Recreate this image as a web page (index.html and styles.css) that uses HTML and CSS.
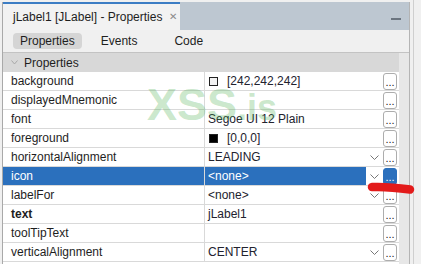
FILE: index.html
```html
<!DOCTYPE html>
<html lang="en">
<head>
	<meta charset="UTF-8">
	<title>jLabel1 [JLabel] - Properties</title>
	<link rel="stylesheet" href="styles.css">
</head>
<body>

<div class="frame">
	<div class="panel">
		<div class="header">
			<div class="doc-tab">
				<span class="tab-title">jLabel1 [JLabel] - Properties</span>
				<span class="tab-close">&#x2715;</span>
			</div>
			<span class="minimize"></span>
		</div>

		<div class="toolbar">
			<span class="mode active">Properties</span>
			<span class="mode events">Events</span>
			<span class="mode code">Code</span>
		</div>

		<div class="sheet">
			<div class="grid">
				<div class="category">
					<svg class="fold" width="7" height="5" viewBox="0 0 7 5"><polyline points="0.5,0.5 3.5,4 6.5,0.5" fill="none" stroke="#a8a8a8" stroke-width="1"/></svg>
					Properties
				</div>

				<div class="row">
					<div class="name">background</div>
					<div class="value"><span class="swatch"></span><span class="text">[242,242,242]</span></div>
					<div class="more"><span class="dots">...</span></div>
				</div>
				<div class="row">
					<div class="name">displayedMnemonic</div>
					<div class="value"></div>
					<div class="more"><span class="dots">...</span></div>
				</div>
				<div class="row">
					<div class="name">font</div>
					<div class="value"><span class="text">Segoe UI 12 Plain</span></div>
					<div class="more"><span class="dots">...</span></div>
				</div>
				<div class="row">
					<div class="name">foreground</div>
					<div class="value"><span class="swatch black"></span><span class="text">[0,0,0]</span></div>
					<div class="more"><span class="dots">...</span></div>
				</div>
				<div class="row">
					<div class="name">horizontalAlignment</div>
					<div class="value"><span class="text">LEADING</span><span class="arrow"><svg width="9" height="5" viewBox="0 0 9 5"><polyline points="0.5,0.5 4.5,4.5 8.5,0.5" fill="none" stroke="#777" stroke-width="1"/></svg></span></div>
					<div class="more"><span class="dots">...</span></div>
				</div>
				<div class="row selected">
					<div class="name">icon</div>
					<div class="value"><span class="text">&lt;none&gt;</span><span class="arrow"><svg width="9" height="5" viewBox="0 0 9 5"><polyline points="0.5,0.5 4.5,4.5 8.5,0.5" fill="none" stroke="#777" stroke-width="1"/></svg></span></div>
					<div class="more"><span class="dots">...</span></div>
				</div>
				<div class="row">
					<div class="name">labelFor</div>
					<div class="value"><span class="text">&lt;none&gt;</span><span class="arrow"><svg width="9" height="5" viewBox="0 0 9 5"><polyline points="0.5,0.5 4.5,4.5 8.5,0.5" fill="none" stroke="#777" stroke-width="1"/></svg></span></div>
					<div class="more"><span class="dots">...</span></div>
				</div>
				<div class="row">
					<div class="name bold">text</div>
					<div class="value"><span class="text">jLabel1</span></div>
					<div class="more"><span class="dots">...</span></div>
				</div>
				<div class="row">
					<div class="name">toolTipText</div>
					<div class="value"></div>
					<div class="more"><span class="dots">...</span></div>
				</div>
				<div class="row">
					<div class="name">verticalAlignment</div>
					<div class="value"><span class="text">CENTER</span><span class="arrow"><svg width="9" height="5" viewBox="0 0 9 5"><polyline points="0.5,0.5 4.5,4.5 8.5,0.5" fill="none" stroke="#777" stroke-width="1"/></svg></span></div>
					<div class="more"><span class="dots">...</span></div>
				</div>
			</div>
			<div class="track"></div>
		</div>
	</div>
	<div class="edge"></div>
</div>

<!-- overlays on top of the screenshot -->
<div class="watermark">XSS<span class="domain">.is</span></div>
<svg class="scribble" width="50" height="16" viewBox="0 0 50 16">
	<path d="M7 6 C 19 5.5, 31 6.5, 45 8.5" fill="none" stroke="#e31b1b" stroke-width="8.5" stroke-linecap="round"/>
</svg>

</body>
</html>
```

FILE: styles.css
```css
html,
body {
    margin: 0;
    background: #f0f0f0;
    font-family: "Liberation Sans", Arial, sans-serif;
    font-size: 12px;
    color: #1e1e1e;
    overflow: hidden;
}
.frame {
    display: flex;
    height: 264px;
}
.panel {
    width: 406px;
    margin: 2px 0 0 2px;
    border-left: 1px solid #a9a9a9;
    border-right: 1px solid #b4b4b4;
    display: flex;
    flex-direction: column;
}
.edge {
    margin-left: 3px;
    border-left: 1px solid #cfcfcf;
}

/* window header with the document tab */
.header {
    height: 28px;
    background: #bdc7d1;
    display: flex;
    align-items: stretch;
}
.doc-tab {
    width: 177px;
    box-sizing: border-box;
    border-top: 2px solid #3c7dc4;
    background: #f2f2f2;
    display: flex;
    align-items: center;
    padding: 0 0 1px 10px;
}
.tab-title {
    white-space: nowrap;
}
.tab-close {
    margin-left: 7px;
    font-size: 10px;
    color: #8a8a8a;
}
.minimize {
    margin: 16px 0 0 auto;
    margin-right: 8px;
    width: 10px;
    height: 2px;
    background: #6b7580;
}

/* Properties / Events / Code switch */
.toolbar {
    height: 22px;
    background: #f0f0f0;
    border-bottom: 1px solid #c3c3c3;
    display: flex;
    align-items: center;
}
.mode {
    height: 16px;
    line-height: 16px;
    padding: 0 7px;
    border-radius: 4px;
}
.mode.active {
    margin-left: 10px;
    background: #d5d5d5;
}
.mode.events {
    margin-left: 12px;
}
.mode.code {
    margin-left: 23px;
}

/* property grid */
.sheet {
    flex: 1;
    display: flex;
}
.grid {
    width: 396px;
    background: #fff;
}
.track {
    flex: 1;
    background: #e7e7e7;
}
.category {
    height: 19px;
    background: #d8d8d8;
    display: flex;
    align-items: center;
    padding-left: 8px;
}
.fold {
    margin-right: 6px;
}
.row {
    height: 19px;
    box-sizing: border-box;
    border-bottom: 1px solid #d9d9d9;
    display: grid;
    grid-template-columns: 202px 177px 17px;
}
.name {
    border-right: 1px solid #d9d9d9;
    padding-left: 8px;
    line-height: 18px;
    white-space: nowrap;
}
.name.bold {
    font-weight: bold;
}
.value {
    display: flex;
    align-items: center;
    padding-left: 3px;
    color: #22222e;
}
.value .text {
    flex: 1;
    white-space: nowrap;
}
.swatch {
    width: 7px;
    height: 7px;
    border: 1px solid #222;
    background: #f2f2f2;
    margin: 0 9px 0 1px;
}
.swatch.black {
    background: #000;
}
.arrow {
    width: 16px;
    align-self: stretch;
    background: #fff;
    display: flex;
    align-items: center;
    justify-content: center;
    padding-top: 1px;
    box-sizing: border-box;
}
.more {
    padding: 1px 0 0 1px;
}
.dots {
    display: block;
    width: 12px;
    height: 15px;
    border: 1px solid #adadad;
    border-radius: 3px;
    background: #fff;
    font-size: 11px;
    line-height: 17px;
    text-align: center;
    color: #222;
}
.row.selected .name,
.row.selected .value {
    background: #2b70bd;
    color: #fff;
}
.row.selected .dots {
    background: #2b70bd;
    border-color: #2b70bd;
    color: #fff;
}

/* overlays */
.watermark {
    position: absolute;
    left: 147px;
    top: 82px;
    font-size: 45px;
    line-height: 45px;
    font-weight: bold;
    color: rgba(76, 175, 80, 0.3);
    white-space: nowrap;
}
.domain {
    font-size: 36px;
}
.scribble {
    position: absolute;
    left: 365px;
    top: 181px;
}
```
